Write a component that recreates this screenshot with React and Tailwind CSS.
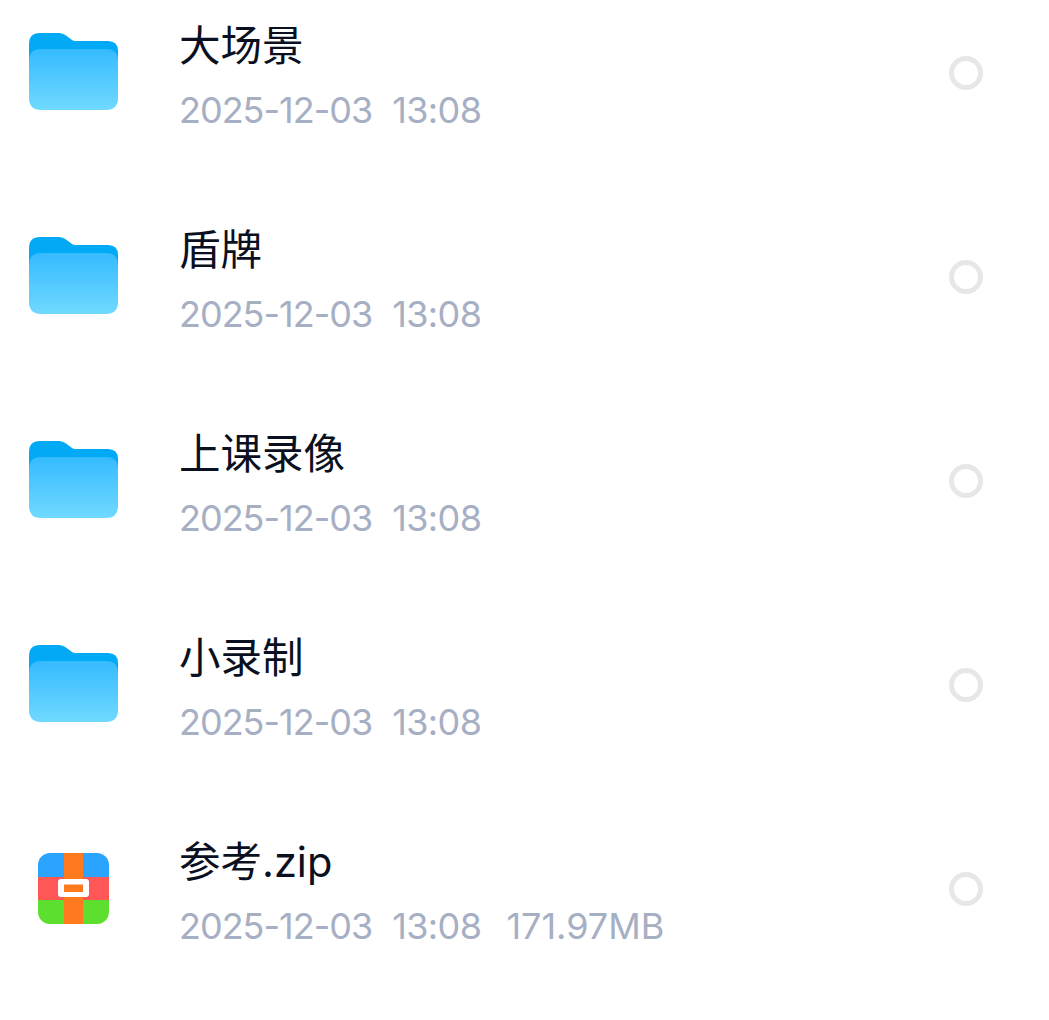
import React from 'react';

const files = [
  { name: '大场景', date: '2025-12-03', time: '13:08', type: 'folder' },
  { name: '盾牌', date: '2025-12-03', time: '13:08', type: 'folder' },
  { name: '上课录像', date: '2025-12-03', time: '13:08', type: 'folder' },
  { name: '小录制', date: '2025-12-03', time: '13:08', type: 'folder' },
  { name: '参考.zip', date: '2025-12-03', time: '13:08', size: '171.97MB', type: 'zip' },
];

const FolderIcon = ({ id }) => (
  <svg className="mb-[3px]" width="89" height="77" viewBox="0 0 89 77">
    <defs>
      <linearGradient id={id} x1="0" y1="0" x2="0" y2="1">
        <stop offset="0" stopColor="#35bbff" />
        <stop offset="1" stopColor="#70d9ff" />
      </linearGradient>
    </defs>
    <path d="M11 0H30Q34 0 37 2.500L43 7C44 7.700 45 8 46 8H79Q89 8 89 18V40H0V11Q0 0 11 0Z" fill="#02aaf6" />
    <path d="M12 16H77Q89 16 89 28V65Q89 77 77 77H12Q0 77 0 65V28Q0 16 12 16Z" fill={`url(#${id})`} />
  </svg>
);

const ZipIcon = () => (
  <svg className="mb-[1px]" width="71" height="71" viewBox="0 0 71 71">
    <defs>
      <clipPath id="zip-clip">
        <rect width="71" height="71" rx="12" />
      </clipPath>
    </defs>
    <g clipPath="url(#zip-clip)">
      <rect width="71" height="24" fill="#2ba4ff" />
      <rect y="24" width="71" height="23" fill="#ff5656" />
      <rect y="47" width="71" height="24" fill="#5cdf2e" />
      <rect x="26" width="19" height="71" fill="#ff7a1f" />
    </g>
    <rect x="20" y="26" width="31" height="18" rx="3" fill="#fff" />
    <rect x="26" y="31.500" width="19" height="7.500" fill="#ff7a1f" />
  </svg>
);

const FileRow = ({ file, index }) => (
  <div className="flex h-[204px] items-center">
    <div className="flex w-[147px] shrink-0 justify-center">
      {file.type === 'folder' ? <FolderIcon id={`folder-grad-${index}`} /> : <ZipIcon />}
    </div>
    <div className="ml-[32px] flex-1 pt-[1px]">
      <div className="h-[60px] text-[41.5px] leading-[60px] text-[#0a1020]">{file.name}</div>
      <div className="mt-[12px] flex h-[44px] gap-[20px] text-[36px] leading-[44px] text-[#a6afc3]">
        <span className="tracking-[-1px]">{file.date}</span>
        <span className="tracking-[-0.6px]">{file.time}</span>
        {file.size && <span className="ml-[5px]">{file.size}</span>}
      </div>
    </div>
    <div className="mr-[66px] h-[34px] w-[34px] rounded-full border-[5px] border-[#e7e7e7]" />
  </div>
);

export default function App() {
  return (
    <div className="h-[1020px] w-full overflow-hidden bg-white font-['Inter','Noto_Sans_CJK_SC',sans-serif]">
      <div className="mt-[-29px] flex flex-col">
        {files.map((file, index) => (
          <FileRow key={file.name} file={file} index={index} />
        ))}
      </div>
    </div>
  );
}
